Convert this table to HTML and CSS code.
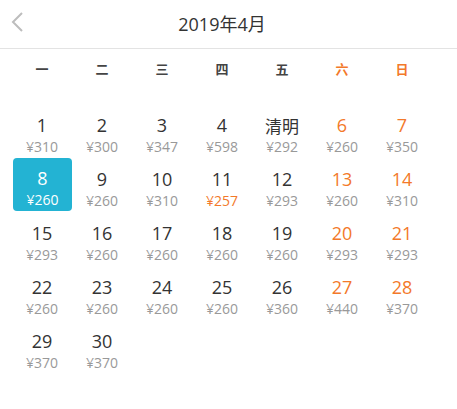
FILE: index.html
```html
<!DOCTYPE html>
<html lang="zh">
<head>
<meta charset="utf-8">
<link rel="stylesheet" href="styles.css">
</head>
<body>
<div class="cal">
  <div class="header">
    <span class="back"><svg width="14" height="22" viewBox="0 0 14 22"><path d="M12 2 L3 11 L12 20" fill="none" stroke="#bdbdbd" stroke-width="2"/></svg></span>
    <div class="title">2019年4月</div>
  </div>
  <div class="weekdays">
    <div>一</div><div>二</div><div>三</div><div>四</div><div>五</div><div class="we">六</div><div class="we">日</div>
  </div>
  <div class="grid">
    <div class="cell"><div class="d">1</div><div class="p">¥310</div></div>
    <div class="cell"><div class="d">2</div><div class="p">¥300</div></div>
    <div class="cell"><div class="d">3</div><div class="p">¥347</div></div>
    <div class="cell"><div class="d">4</div><div class="p">¥598</div></div>
    <div class="cell"><div class="d cn">清明</div><div class="p">¥292</div></div>
    <div class="cell we"><div class="d">6</div><div class="p">¥260</div></div>
    <div class="cell we"><div class="d">7</div><div class="p">¥350</div></div>

    <div class="cell sel"><div class="d">8</div><div class="p">¥260</div></div>
    <div class="cell"><div class="d">9</div><div class="p">¥260</div></div>
    <div class="cell"><div class="d">10</div><div class="p">¥310</div></div>
    <div class="cell"><div class="d">11</div><div class="p low">¥257</div></div>
    <div class="cell"><div class="d">12</div><div class="p">¥293</div></div>
    <div class="cell we"><div class="d">13</div><div class="p">¥260</div></div>
    <div class="cell we"><div class="d">14</div><div class="p">¥310</div></div>

    <div class="cell"><div class="d">15</div><div class="p">¥293</div></div>
    <div class="cell"><div class="d">16</div><div class="p">¥260</div></div>
    <div class="cell"><div class="d">17</div><div class="p">¥260</div></div>
    <div class="cell"><div class="d">18</div><div class="p">¥260</div></div>
    <div class="cell"><div class="d">19</div><div class="p">¥260</div></div>
    <div class="cell we"><div class="d">20</div><div class="p">¥293</div></div>
    <div class="cell we"><div class="d">21</div><div class="p">¥293</div></div>

    <div class="cell"><div class="d">22</div><div class="p">¥260</div></div>
    <div class="cell"><div class="d">23</div><div class="p">¥260</div></div>
    <div class="cell"><div class="d">24</div><div class="p">¥260</div></div>
    <div class="cell"><div class="d">25</div><div class="p">¥260</div></div>
    <div class="cell"><div class="d">26</div><div class="p">¥360</div></div>
    <div class="cell we"><div class="d">27</div><div class="p">¥440</div></div>
    <div class="cell we"><div class="d">28</div><div class="p">¥370</div></div>

    <div class="cell"><div class="d">29</div><div class="p">¥370</div></div>
    <div class="cell"><div class="d">30</div><div class="p">¥370</div></div>
  </div>
</div>
</body>
</html>
```
FILE: styles.css
```css
html, body {
  margin: 0;
  padding: 0;
  background: #fff;
}
body {
  font-family: "Open Sans", "Noto Sans CJK SC", sans-serif;
  color: #333;
}
.cal {
  width: 457px;
}
.header {
  position: relative;
  height: 48px;
  border-bottom: 1px solid #e3e3e3;
  display: flex;
  align-items: center;
  justify-content: center;
  padding-right: 13px;
  box-sizing: content-box;
}
.back {
  position: absolute;
  left: 10px;
  top: 11px;
  display: block;
  height: 22px;
}
.back svg { display: block; }
.title {
  font-size: 18px;
  line-height: 26px;
  color: #333;
}
.weekdays {
  display: grid;
  grid-template-columns: repeat(7, 60px);
  padding-left: 12px;
  height: 40px;
  line-height: 40px;
  font-size: 13px;
  font-weight: bold;
  text-align: center;
  color: #444;
  font-family: "Noto Sans CJK SC", sans-serif;
}
.weekdays .we { color: #f3792a; }
.grid {
  display: grid;
  grid-template-columns: repeat(7, 60px);
  grid-auto-rows: 54px;
  padding-left: 12px;
  margin-top: 15px;
  text-align: center;
}
.cell {
  box-sizing: border-box;
  padding-top: 9px;
}
.d {
  font-size: 18px;
  line-height: 25px;
  color: #333;
}
.d.cn {
  font-family: "Noto Sans CJK SC", sans-serif;
  font-size: 17px;
}
.p {
  font-size: 14px;
  line-height: 18px;
  color: #999;
}
.we .d { color: #f3792a; }
.p.low { color: #f3792a; }
.cell.sel {
  background: #23b3d3;
  border-radius: 4px;
  margin: 0 0 1px 1px;
  padding-top: 8px;
}
.cell.sel .d, .cell.sel .p { color: #fff; }
```
